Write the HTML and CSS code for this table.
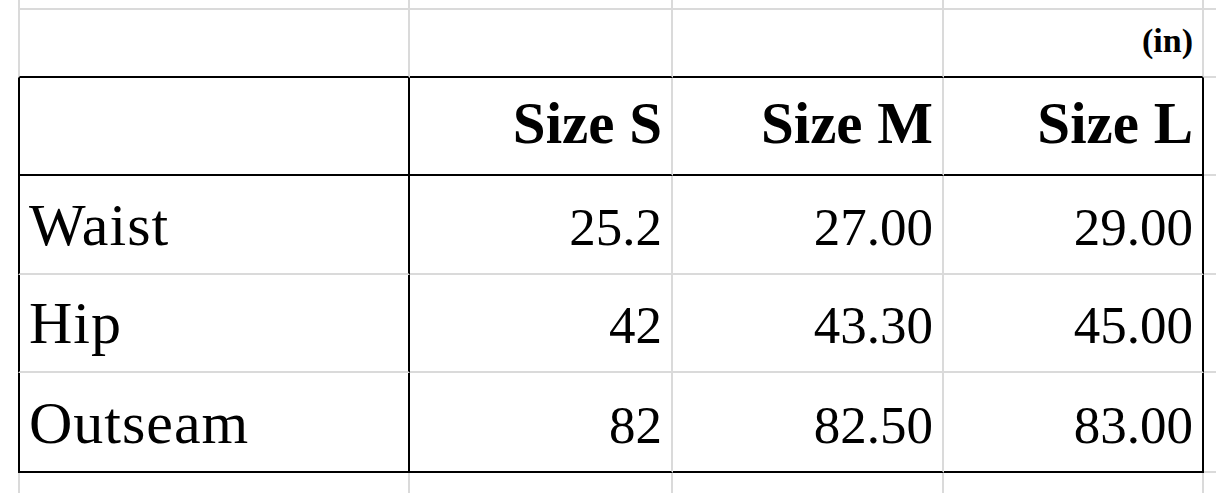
FILE: index.html
```html
<!DOCTYPE html>
<html>
<head>
<meta charset="utf-8">
<link rel="stylesheet" href="styles.css">
</head>
<body>
<div class="sheet">
  <!-- row 0 (partial) -->
  <div class="c a"></div><div class="c"></div><div class="c"></div><div class="c"></div><div class="c e"></div>
  <!-- row 1 -->
  <div class="c a r1 bb"></div><div class="c r1 bb"></div><div class="c r1 bb"></div><div class="c r1 bb num"><span class="unit">(in)</span></div><div class="c r1 e"></div>
  <!-- header -->
  <div class="c a hd bl br bb"></div>
  <div class="c hd num bb"><span class="head">Size S</span></div>
  <div class="c hd num bb"><span class="head">Size M</span></div>
  <div class="c hd num bb br"><span class="head">Size L</span></div>
  <div class="c hd e"></div>
  <!-- Waist -->
  <div class="c a dt bl br"><span class="lab">Waist</span></div>
  <div class="c dt num"><span class="val">25.2</span></div>
  <div class="c dt num"><span class="val">27.00</span></div>
  <div class="c dt num br"><span class="val">29.00</span></div>
  <div class="c dt e"></div>
  <!-- Hip -->
  <div class="c a dt bl br"><span class="lab">Hip</span></div>
  <div class="c dt num"><span class="val">42</span></div>
  <div class="c dt num"><span class="val">43.30</span></div>
  <div class="c dt num br"><span class="val">45.00</span></div>
  <div class="c dt e"></div>
  <!-- Outseam -->
  <div class="c a dt bl br bb"><span class="lab">Outseam</span></div>
  <div class="c dt num bb"><span class="val">82</span></div>
  <div class="c dt num bb"><span class="val">82.50</span></div>
  <div class="c dt num br bb"><span class="val">83.00</span></div>
  <div class="c dt e"></div>
  <!-- row 6 (partial) -->
  <div class="c a last"></div><div class="c last"></div><div class="c last"></div><div class="c last"></div><div class="c e last"></div>
</div>
</body>
</html>
```

FILE: styles.css
```css
html, body {
  margin: 0;
  padding: 0;
  background: #ffffff;
}

body {
  width: 1216px;
  height: 493px;
  overflow: hidden;
}

.sheet {
  margin-left: 18px;
  display: grid;
  grid-template-columns: 392px 263px 271px 260px 12px;
  grid-template-rows: 10px 68px 98px 99px 98px 100px 20px;
  width: 1198px;
  font-family: "Liberation Serif", "Times New Roman", serif;
  color: #000;
}

.c {
  box-sizing: border-box;
  border-right: 2px solid #dadada;
  border-bottom: 2px solid #dadada;
  display: flex;
  align-items: flex-end;
  justify-content: flex-start;
  line-height: 1;
  white-space: nowrap;
  min-width: 0;
}

.a {
  border-left: 2px solid #dadada;
}

.e {
  border-right: none;
}

.last {
  border-bottom: none;
}

.num {
  justify-content: flex-end;
  padding-right: 9px;
}

.bb { border-bottom-color: #000; }
.br { border-right-color: #000; }
.bl { border-left-color: #000; }

.unit {
  font-weight: bold;
  font-size: 34px;
  padding-bottom: 18px;
}

.head {
  font-weight: bold;
  font-size: 59px;
  padding-bottom: 21px;
}

.lab {
  font-size: 60px;
  letter-spacing: 1px;
  padding-left: 9px;
  padding-bottom: 18px;
}

.val {
  font-size: 53px;
  padding-bottom: 19px;
}
```
